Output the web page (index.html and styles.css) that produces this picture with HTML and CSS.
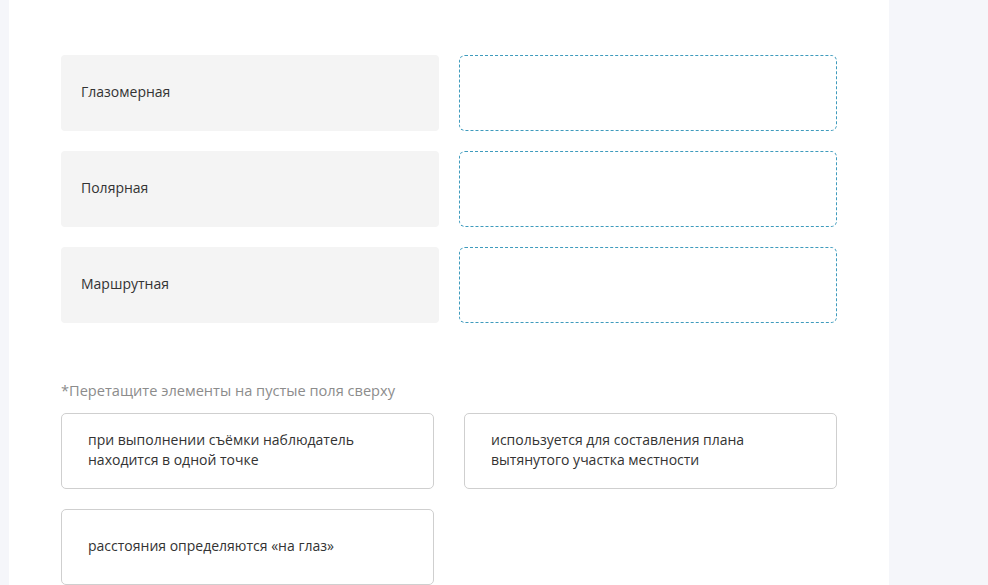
FILE: index.html
```html
<!DOCTYPE html>
<html lang="ru">
<head>
  <meta charset="utf-8">
  <title>Сопоставление</title>
  <link rel="stylesheet" href="styles.css">
</head>
<body>
  <div class="panel">
    <div class="matchGrid">
      <div class="term">Глазомерная</div>
      <div class="dropZone"></div>

      <div class="term">Полярная</div>
      <div class="dropZone"></div>

      <div class="term">Маршрутная</div>
      <div class="dropZone"></div>
    </div>

    <p class="hint">*Перетащите элементы на пустые поля сверху</p>

    <div class="itemGrid">
      <div class="item">при выполнении съёмки наблюдатель находится в одной точке</div>
      <div class="item">используется для составления плана вытянутого участка местности</div>
      <div class="item">расстояния определяются «на глаз»</div>
    </div>
  </div>
</body>
</html>
```

FILE: styles.css
```css
html, body {
  margin: 0;
  height: 100%;
}

body {
  background-color: #f5f6fa;
  font-family: "Open Sans", "Noto Sans", Arial, sans-serif;
  color: #333;
  overflow: hidden;
}

.panel {
  width: 880px;
  min-height: 100%;
  margin-left: 9px;
  padding: 55px 52px 0;
  box-sizing: border-box;
  background-color: #fff;
}

.matchGrid {
  display: grid;
  grid-template-columns: 378px 378px;
  column-gap: 20px;
  row-gap: 20px;
}

.term {
  height: 76px;
  display: flex;
  align-items: center;
  padding: 0 20px 3px;
  background-color: #f4f4f4;
  border-radius: 4px;
  font-size: 14px;
  box-sizing: border-box;
}

.dropZone {
  height: 76px;
  border: 1px dashed #3f9bbd;
  border-radius: 6px;
  box-sizing: border-box;
}

.hint {
  margin: 51px 0 6px;
  font-size: 14.6px;
  line-height: 33px;
  color: #8c8c8c;
}

.itemGrid {
  display: grid;
  grid-template-columns: 373px 373px;
  column-gap: 30px;
  row-gap: 20px;
}

.item {
  height: 76px;
  display: flex;
  align-items: center;
  padding: 0 60px 2px 26px;
  border: 1px solid #cfcfcf;
  border-radius: 5px;
  font-size: 14px;
  line-height: 20px;
  box-sizing: border-box;
}
```
